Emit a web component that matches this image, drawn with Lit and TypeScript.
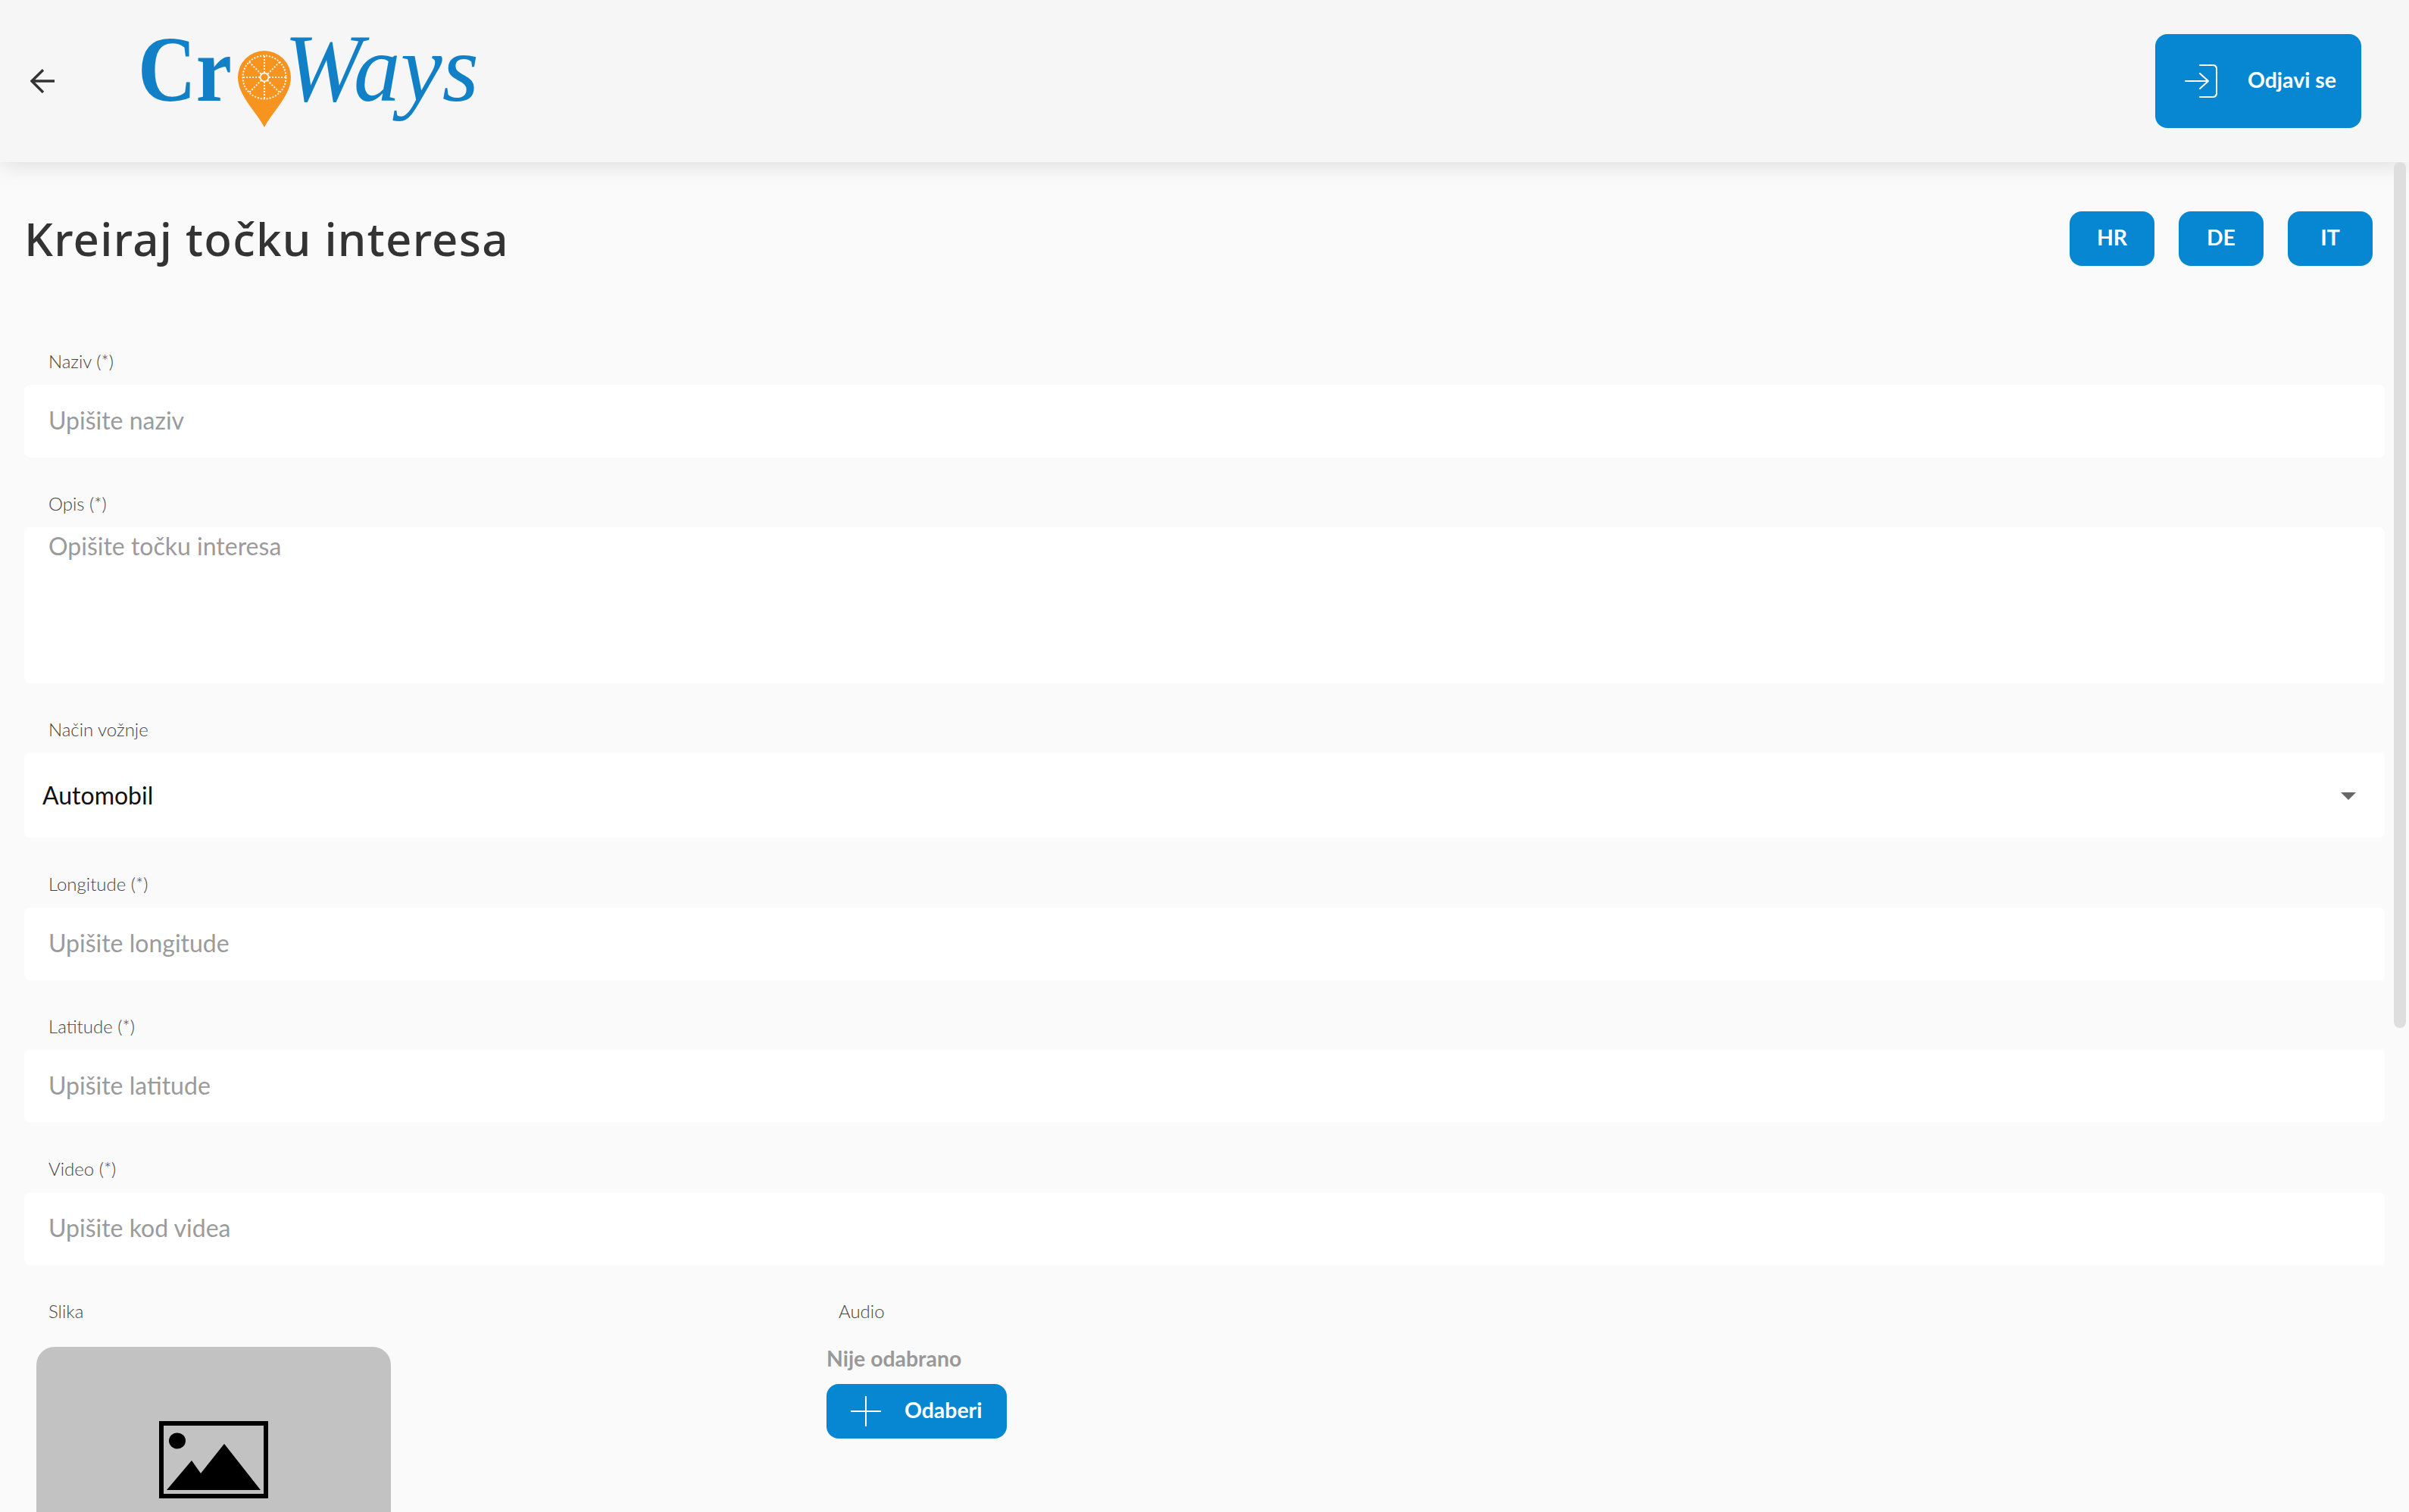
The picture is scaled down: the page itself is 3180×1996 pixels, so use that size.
import { LitElement, html, css } from "lit";
import { customElement } from "lit/decorators.js";

const textFields = [
  { label: "Longitude (*)", placeholder: "Upišite longitude" },
  { label: "Latitude (*)", placeholder: "Upišite latitude" },
  { label: "Video (*)", placeholder: "Upišite kod videa" },
];

@customElement("app-root")
export class AppRoot extends LitElement {
  static styles = css`
    :host {
      display: block;
      position: relative;
      width: 3180px;
      height: 1996px;
      overflow: hidden;
      background: #fafafa;
      font-family: "Lato", "Liberation Sans", sans-serif;
      color: #333;
    }
    * { box-sizing: border-box; }
    .header {
      position: relative;
      z-index: 2;
      height: 214px;
      background: #f6f6f6;
      box-shadow: 0 2px 30px rgba(0, 0, 0, 0.13);
      display: flex;
      align-items: center;
      padding-left: 40px;
      padding-right: 63px;
    }
    .back { width: 32px; height: 32px; flex: none; display: block; }
    .logo { flex: none; width: 460px; height: 190px; margin-left: 108px; margin-top: 4px; display: block; }
    .logo text { font-family: "Liberation Serif", serif; fill: #1180c6; }
    .spacer { flex: 1; }
    .btn {
      border: none;
      background: #0787d2;
      color: #fff;
      font-family: inherit;
      font-weight: 700;
      font-size: 28.4px;
      border-radius: 16px;
      display: flex;
      align-items: center;
      justify-content: center;
      padding: 0 0 4px;
    }
    .logout { width: 272px; height: 124px; gap: 39px; justify-content: flex-start; padding-left: 39px; }
    .logout svg { width: 44px; height: 44px; flex: none; position: relative; top: 2px; }
    .content { padding: 65px 32px 0 32px; }
    .title-row { display: flex; align-items: center; height: 72px; padding-right: 16px; }
    h1 {
      margin: 0;
      flex: 1;
      font-family: "Noto Sans", sans-serif;
      font-weight: 500;
      font-size: 60px;
      line-height: 72px;
      letter-spacing: 1.25px;
      color: #333;
    }
    .langs { display: flex; gap: 32px; }
    .lang { width: 112px; height: 72px; }
    .form { margin-top: 111px; }
    .label {
      display: block;
      margin: 46px 0 16px;
      padding-left: 32px;
      height: 30px;
      font-weight: 300;
      font-size: 24px;
      line-height: 30px;
      color: #444;
    }
    input, textarea, select {
      display: block;
      width: 100%;
      border: none;
      outline: none;
      background: #fff;
      border-radius: 8px;
      font-family: inherit;
      font-weight: 400;
      font-size: 32px;
      color: #333;
      margin: 0;
    }
    input { height: 96px; padding: 0 32px 4px; }
    textarea { height: 206px; padding: 9px 32px; line-height: 32px; resize: none; display: block; }
    ::placeholder { color: #9b9b9b; opacity: 1; }
    .select-wrap { position: relative; height: 112px; }
    select { appearance: none; -webkit-appearance: none; height: 112px; padding: 0 24px 2px; color: #111; }
    .caret { position: absolute; right: 38px; top: 52px; width: 20px; height: 10px; display: block; }
    .media { display: grid; grid-template-columns: 1059px 1fr; }
    .image-box {
      width: 468px;
      height: 468px;
      margin: 32px 0 0 16px;
      background: #c2c2c2;
      border-radius: 24px;
      padding-top: 98px;
      display: flex;
      justify-content: center;
      align-items: flex-start;
    }
    .image-box svg { width: 144px; height: 102px; display: block; }
    .audio .label { padding-left: 16px; }
    .none { font-weight: 700; font-size: 28.4px; line-height: 30px; color: #999; margin-top: 32px; }
    .pick { width: 238px; height: 72px; margin-top: 19px; gap: 30px; justify-content: flex-start; padding-left: 31px; }
    .pick svg { width: 42px; height: 42px; flex: none; position: relative; top: 2px; }
    .thumb {
      position: absolute;
      z-index: 3;
      left: 3160px;
      top: 214px;
      width: 16px;
      height: 1143px;
      border-radius: 8px;
      background: #dedede;
    }
  `;

  private field(label: string, placeholder: string) {
    return html`<label class="label">${label}</label><input placeholder=${placeholder} />`;
  }

  render() {
    return html`
      <header class="header">
        <svg class="back" viewBox="0 0 32 32" fill="none" stroke="#333" stroke-width="3.4">
          <path d="M32 16H2M17 1.2 2 16l15 15" />
        </svg>
        <svg class="logo" viewBox="0 -30 460 190">
          <text x="2" y="89" font-size="123" font-weight="700" textLength="124" lengthAdjust="spacingAndGlyphs">Cr</text>
          <text x="195" y="89" font-size="127" font-style="italic" textLength="257" lengthAdjust="spacingAndGlyphs">Ways</text>
          <path d="M169 124C156 100 134 82 134 58a35 35 0 0 1 70 0C204 82 182 100 169 124Z" fill="#f79420" />
          <g fill="none" stroke="#fff" stroke-width="2" stroke-dasharray="2 2" opacity=".92">
            <circle cx="169" cy="58" r="28.5" />
            <circle cx="169" cy="58" r="5.5" stroke-dasharray="none" />
            <path d="M169 30v22M169 64v22M141 58h22M175 58h22M149 38l16 16M173 62l16 16M189 38l-16 16M165 62l-16 16" />
          </g>
        </svg>
        <div class="spacer"></div>
        <button class="btn logout">
          <svg viewBox="0 0 44 44" fill="none" stroke="#fff" stroke-width="2" stroke-linecap="round" stroke-linejoin="round">
            <path d="M20 1h18a5 5 0 0 1 4 4v34a5 5 0 0 1-4 4H20M1 22h30M20 12l11 10-11 10" />
          </svg>
          <span>Odjavi se</span>
        </button>
      </header>
      <main class="content">
        <div class="title-row">
          <h1>Kreiraj točku interesa</h1>
          <div class="langs">
            <button class="btn lang">HR</button>
            <button class="btn lang">DE</button>
            <button class="btn lang">IT</button>
          </div>
        </div>
        <form class="form">
          ${this.field("Naziv (*)", "Upišite naziv")}
          <label class="label">Opis (*)</label>
          <textarea placeholder="Opišite točku interesa"></textarea>
          <label class="label">Način vožnje</label>
          <div class="select-wrap">
            <select><option>Automobil</option></select>
            <svg class="caret" viewBox="0 0 20 10"><path d="M0 0h20L10 10Z" fill="#666" /></svg>
          </div>
          ${textFields.map((f) => this.field(f.label, f.placeholder))}
          <div class="media">
            <div>
              <label class="label">Slika</label>
              <div class="image-box">
                <svg viewBox="0 0 144 102">
                  <rect x="3" y="3" width="138" height="96" fill="none" stroke="#000" stroke-width="6" />
                  <ellipse cx="24" cy="26" rx="11" ry="10.5" fill="#000" />
                  <path d="M10 91 43 52 55 69 86 30 134 91Z" fill="#000" />
                </svg>
              </div>
            </div>
            <div class="audio">
              <label class="label">Audio</label>
              <div class="none">Nije odabrano</div>
              <button type="button" class="btn pick">
                <svg viewBox="0 0 42 42" stroke="#fff" stroke-width="2" fill="none"><path d="M21 1v40M1 21h40" /></svg>
                <span>Odaberi</span>
              </button>
            </div>
          </div>
        </form>
      </main>
      <div class="thumb"></div>
    `;
  }
}
